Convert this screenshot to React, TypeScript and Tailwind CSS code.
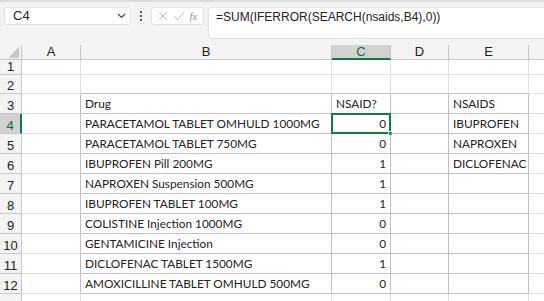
import React from 'react';

const cols = ['A', 'B', 'C', 'D', 'E', 'F'];
const colW = ['w-[59px]', 'w-[251px]', 'w-[59px]', 'w-[58px]', 'w-[80px]', 'w-[70px]'];

const drugs: [string, number][] = [
  ['PARACETAMOL TABLET OMHULD 1000MG', 0],
  ['PARACETAMOL TABLET 750MG', 0],
  ['IBUPROFEN Pill 200MG', 1],
  ['NAPROXEN Suspension 500MG', 1],
  ['IBUPROFEN TABLET 100MG', 1],
  ['COLISTINE Injection 1000MG', 0],
  ['GENTAMICINE Injection', 0],
  ['DICLOFENAC TABLET 1500MG', 1],
  ['AMOXICILLINE TABLET OMHULD 500MG', 0],
];
const nsaids = ['IBUPROFEN', 'NAPROXEN', 'DICLOFENAC'];

function cellText(row: number, col: number): { text: string; right?: boolean } {
  if (row === 3) {
    if (col === 1) return { text: 'Drug' };
    if (col === 2) return { text: 'NSAID?' };
    if (col === 4) return { text: 'NSAIDS' };
  }
  if (row >= 4 && row <= 12) {
    const d = drugs[row - 4];
    if (col === 1) return { text: d[0] };
    if (col === 2) return { text: String(d[1]), right: true };
    if (col === 4 && row - 4 < nsaids.length) return { text: nsaids[row - 4] };
  }
  return { text: '' };
}

function Toolbar() {
  return (
    <div className="h-[45px] bg-[#f3f3f3] border-t-2 border-[#dcdcdc] flex items-start pt-[5px] pl-[4px] gap-[4px]">
      <div className="w-[127px] h-[18px] bg-white rounded-[3px] border border-[#e2e2e2] flex items-center pl-[8px] pr-[4px] text-[13px] text-[#222]">
        <span className="flex-1">C4</span>
        <svg width="9" height="6" viewBox="0 0 9 6"><path d="M1 1l3.5 3.5L8 1" stroke="#444" strokeWidth="1.2" fill="none" /></svg>
      </div>
      <div className="w-[12px] h-[18px] flex flex-col items-center justify-center gap-[2px]">
        <span className="w-[2px] h-[2px] bg-[#555]" />
        <span className="w-[2px] h-[2px] bg-[#555]" />
        <span className="w-[2px] h-[2px] bg-[#555]" />
      </div>
      <div className="w-[53px] h-[18px] bg-white rounded-[3px] border border-[#e2e2e2] flex items-center justify-around px-[3px]">
        <svg width="10" height="10" viewBox="0 0 10 10"><path d="M1 1l8 8M9 1l-8 8" stroke="#bdbdbd" strokeWidth="1" /></svg>
        <svg width="12" height="10" viewBox="0 0 12 10"><path d="M1 5l3.5 4L11 1" stroke="#bdbdbd" strokeWidth="1" fill="none" /></svg>
        <span className="text-[11px] italic text-[#999] leading-none" style={{ fontFamily: '"Liberation Serif", serif' }}>fx</span>
      </div>
      <div className="flex-1 h-[32px] bg-white rounded-l-[4px] border border-r-0 border-[#e2e2e2] pl-[7px] text-[12px] text-[#222]">
        =SUM(IFERROR(SEARCH(nsaids,B4),0))
      </div>
    </div>
  );
}

function Cell({ row, ci }: { row: number; ci: number }) {
  const inTable = row >= 3 && row <= 12 && ci >= 1 && ci <= 4;
  const aboveTable = row === 2 && ci >= 1 && ci <= 4;
  const leftOfTable = row >= 3 && row <= 12 && ci === 0;
  const rb = inTable || leftOfTable ? 'border-r-[#bfbfbf]' : 'border-r-[#e1e1e1]';
  const bb = inTable || aboveTable ? 'border-b-[#bfbfbf]' : 'border-b-[#e1e1e1]';
  const { text, right } = cellText(row, ci);
  const selected = row === 4 && ci === 2;
  return (
    <div
      className={`${colW[ci]} shrink-0 relative border-r border-b ${rb} ${bb} flex items-center pl-[4px] pr-[4px] text-[#222] whitespace-nowrap ${
        right ? 'justify-end' : ''
      }`}
      style={{ fontFamily: 'Lato, "Liberation Sans", sans-serif' }}
    >
      <span className="text-[11.8px]">{text}</span>
      {selected && (
        <>
          <div className="absolute -left-[1px] -top-[1px] -right-[1px] -bottom-[1px] border-2 border-[#107c41]" />
          <div className="absolute -right-[3px] -bottom-[3px] w-[5px] h-[5px] bg-[#107c41] border border-white" />
        </>
      )}
    </div>
  );
}

export default function App() {
  return (
    <div className="w-[544px] h-[301px] overflow-hidden bg-white" style={{ fontFamily: '"Liberation Sans", Arial, sans-serif' }}>
      <Toolbar />
      {/* column headers */}
      <div className="flex h-[15px] bg-[#f3f3f3] text-[13px] text-[#222] leading-[14px]">
        <div className="w-[22px] shrink-0 border-r border-b border-[#c8c8c8] flex items-end justify-end pr-[2px] pb-[1px]">
          <svg width="11" height="11" viewBox="0 0 11 11"><path d="M11 0L11 11L0 11Z" fill="#c8c8c8" /></svg>
        </div>
        {cols.map((c, i) =>
          c === 'C' ? (
            <div key={c} className={`${colW[i]} shrink-0 text-center bg-[#d2d2d2] text-[#0e6b39] border-r border-r-[#c8c8c8] border-b-2 border-b-[#107c41]`}>
              {c}
            </div>
          ) : (
            <div key={c} className={`${colW[i]} shrink-0 text-center border-r border-b border-[#c8c8c8]`}>
              {c}
            </div>
          )
        )}
      </div>
      {/* rows */}
      {Array.from({ length: 13 }, (_, r) => r + 1).map((row) => (
        <div key={row} className={`flex ${row === 1 ? 'h-[15px]' : row === 2 ? 'h-[19px]' : 'h-[20px]'}`}>
          {row === 4 ? (
            <div className="w-[22px] shrink-0 flex items-end justify-center leading-none pb-[1px] text-[13px] bg-[#d2d2d2] text-[#0e6b39] border-r-2 border-r-[#107c41] border-b border-b-[#c8c8c8]">
              {row}
            </div>
          ) : (
            <div className="w-[22px] shrink-0 flex items-end justify-center leading-none pb-[1px] text-[13px] bg-[#f3f3f3] text-[#222] border-r border-b border-[#c8c8c8]">
              {row}
            </div>
          )}
          {cols.map((c, ci) => (
            <Cell key={c} row={row} ci={ci} />
          ))}
        </div>
      ))}
    </div>
  );
}
